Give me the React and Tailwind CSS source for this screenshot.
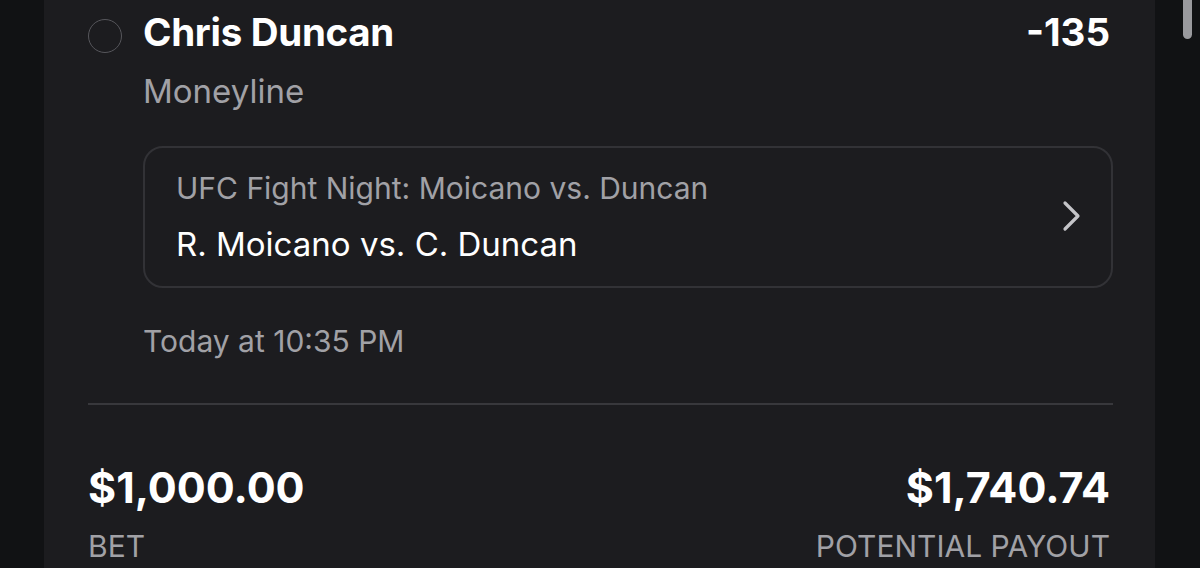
import React from 'react';

const App = () => {
  return (
    <div className="relative flex h-[568px] w-full overflow-hidden bg-[#111214] font-['Inter',sans-serif]">
      {/* Bet slip card */}
      <div className="ml-[44px] flex w-[1111px] flex-col bg-[#1c1c1f] pl-[44px] pr-[42px] pt-[9px]">
        {/* Selection row */}
        <div className="flex items-start">
          <div className="mt-[10px] h-[34px] w-[34px] shrink-0 rounded-full border-[1.5px] border-[#56565b]" />
          <div className="ml-[21px] flex-1">
            <div className="flex items-center justify-between">
              <span className="text-[38.5px] font-bold leading-[46px] tracking-[-0.3px] text-white">Chris Duncan</span>
              <span className="mr-[3px] text-[38.5px] font-bold leading-[46px] text-white">-135</span>
            </div>
            <div className="mt-[16px] text-[33px] leading-[40px] text-[#a1a1a6]">Moneyline</div>

            {/* Event box */}
            <div className="mt-[35px] flex items-center justify-between rounded-[20px] border-2 border-[#323236] pb-[24px] pl-[31px] pr-[29px] pt-[22px]">
              <div>
                <div className="text-[30px] leading-[36px] text-[#a1a1a6]">UFC Fight Night: Moicano vs. Duncan</div>
                <div className="mt-[20px] text-[33px] leading-[36px] text-white">R. Moicano vs. C. Duncan</div>
              </div>
              <svg className="h-[32px] w-[20px] text-[#c4c4c8]" viewBox="0 0 20 32" fill="none" stroke="currentColor" strokeWidth="3.2" strokeLinecap="round" strokeLinejoin="round">
                <path d="M3 3l13 13L3 29" />
              </svg>
            </div>

            <div className="mt-[35px] text-[30px] leading-[36px] text-[#a1a1a6]">Today at 10:35 PM</div>
          </div>
        </div>

        {/* Divider */}
        <div className="mt-[44px] h-[2px] w-full bg-[#38383c]" />

        {/* Totals */}
        <div className="mt-[58px] flex items-start justify-between">
          <div>
            <div className="text-[43px] font-bold leading-[48px] text-white">$1,000.00</div>
            <div className="mt-[17px] text-[30px] leading-[36px] text-[#a1a1a6]">BET</div>
          </div>
          <div className="text-right">
            <div className="mr-[3px] text-[43px] font-bold leading-[48px] text-white">$1,740.74</div>
            <div className="mr-[3px] mt-[17px] text-[30px] leading-[36px] text-[#a1a1a6]">POTENTIAL PAYOUT</div>
          </div>
        </div>
      </div>

      {/* Scrollbar thumb */}
      <div className="absolute right-[8px] top-0 h-[39px] w-[9px] rounded-b-full bg-[#9a9a9e]" />
    </div>
  );
};

export default App;
